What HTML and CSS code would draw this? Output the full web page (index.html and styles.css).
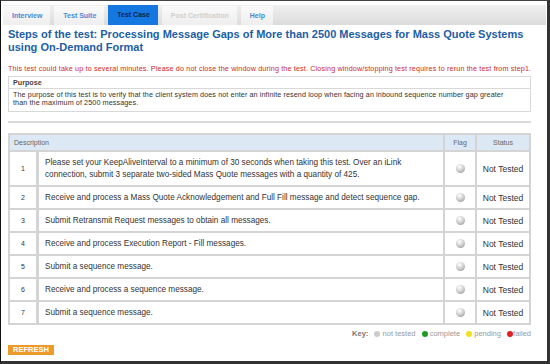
FILE: index.html
```html
<!DOCTYPE html>
<html><head>
    <title>Test Case</title>
    <meta http-equiv="Content-Type" content="text/html; charset=UTF-8">
    <link rel="stylesheet" href="styles.css">
</head>
<body>
<div class="frame">
    <div class="tabbar">
        <a class="tab">Interview</a>
        <a class="tab">Test Suite</a>
        <a class="tab active">Test Case</a>
        <a class="tab disabled">Post Certification</a>
        <a class="tab">Help</a>
    </div>

    <div class="content">
        <h1>Steps of the test: Processing Message Gaps of More than 2500 Messages for Mass Quote Systems using On-Demand Format</h1>
        <p class="warning">This test could take up to several minutes. Please do not close the window during the test. Closing window/stopping test requires to rerun the test from step1.</p>

        <div class="purpose">
            <div class="purpose-head">Purpose</div>
            <div class="purpose-body">The purpose of this test is to verify that the client system does not enter an infinite resend loop when facing an inbound sequence number gap greater than the maximum of 2500 messages.</div>
        </div>

        <div class="separator"></div>

        <table class="steps">
            <tr>
                <th colspan="2" class="th-desc">Description</th>
                <th class="th-flag">Flag</th>
                <th class="th-status">Status</th>
            </tr>
            <tr class="tall">
                <td class="num">1</td>
                <td class="desc">Please set your KeepAliveInterval to a minimum of 30 seconds when taking this test. Over an iLink connection, submit 3 separate two-sided Mass Quote messages with a quantity of 425.</td>
                <td class="flag"><span class="ball"></span></td>
                <td class="status">Not Tested</td>
            </tr>
            <tr>
                <td class="num">2</td>
                <td class="desc">Receive and process a Mass Quote Acknowledgement and Full Fill message and detect sequence gap.</td>
                <td class="flag"><span class="ball"></span></td>
                <td class="status">Not Tested</td>
            </tr>
            <tr>
                <td class="num">3</td>
                <td class="desc">Submit Retransmit Request messages to obtain all messages.</td>
                <td class="flag"><span class="ball"></span></td>
                <td class="status">Not Tested</td>
            </tr>
            <tr>
                <td class="num">4</td>
                <td class="desc">Receive and process Execution Report - Fill messages.</td>
                <td class="flag"><span class="ball"></span></td>
                <td class="status">Not Tested</td>
            </tr>
            <tr>
                <td class="num">5</td>
                <td class="desc">Submit a sequence message.</td>
                <td class="flag"><span class="ball"></span></td>
                <td class="status">Not Tested</td>
            </tr>
            <tr>
                <td class="num">6</td>
                <td class="desc">Receive and process a sequence message.</td>
                <td class="flag"><span class="ball"></span></td>
                <td class="status">Not Tested</td>
            </tr>
            <tr>
                <td class="num">7</td>
                <td class="desc">Submit a sequence message.</td>
                <td class="flag"><span class="ball"></span></td>
                <td class="status">Not Tested</td>
            </tr>
        </table>

        <div class="key">
            <b>Key:</b>
            <span class="dot grey"></span> not tested
            <span class="dot green"></span> complete
            <span class="dot yellow"></span> pending
            <span class="dot red"></span>failed
        </div>

        <a class="refresh">REFRESH</a>
    </div>
</div>
</body></html>
```

FILE: styles.css
```css
body { margin: 0; font-family: "Liberation Sans", Arial, sans-serif; background: #fff; }
.frame { width: 550px; height: 364px; box-sizing: border-box; border-left: 1px solid #111; border-top: 1px solid #444; border-right: 3px solid #333; border-bottom: 3px solid #333; overflow: hidden; }

.tabbar { display: flex; align-items: flex-end; gap: 4px; height: 20px; margin: 4px 1px 0 2px; padding-left: 0; background: linear-gradient(#f0f0f0, #dcdcdc); }
.tab { display: block; height: 19px; line-height: 19px; box-sizing: border-box; padding: 0 8px 0 9px; font-size: 7px; font-weight: bold; color: #4d88d2; background: linear-gradient(#fafafa, #eeeeee); }
.tab.active { height: 20px; line-height: 20px; background: #1577e0; color: #0b2450; }
.tab.disabled { color: #cfcfcf; }

.content { padding: 0 16px 0 7px; }

h1 { margin: 3px 0 0 0; font-size: 11px; line-height: 13px; color: #215ea4; }
.warning { margin: 10px 0 0 0; font-size: 7.2px; letter-spacing: 0.15px; white-space: nowrap; line-height: 9px; color: #cc2a2a; }

.purpose { margin-top: 3px; border: 1px solid #d8d8d8; font-size: 7.2px; color: #333; }
.purpose-head { font-weight: bold; padding: 2px 4px 2px 4px; border-bottom: 1px solid #d8d8d8; line-height: 7px; color: #444; }
.purpose-body { padding: 2px 12px 4px 4px; line-height: 8px; letter-spacing: 0.1px; }

.separator { margin-top: 9px; border-top: 2px solid #dadada; }

.steps { margin-top: 10px; width: 100%; border-collapse: collapse; border: 2px solid #d4d4d4; }
.steps th { background: #dce8f4; font-weight: normal; font-size: 7px; color: #666; height: 15px; padding: 0 4px; border: 2px solid #d4d4d4; }
.steps .th-desc { text-align: left; }
.steps .th-flag { width: 22px; }
.steps .th-status { width: 44px; }
.steps td { border: 2px solid #d4d4d4; height: 21px; font-size: 8.2px; color: #333; padding: 0 4px; }
.steps tr.tall td { height: 33px; }
.steps .num { width: 18px; text-align: center; font-size: 7px; border-right-width: 3px; }
.steps .desc { padding-left: 6px; padding-right: 14px; line-height: 12px; }
.steps .flag { text-align: center; }
.steps .status { text-align: center; font-size: 8.5px; }

.ball { display: inline-block; width: 9px; height: 9px; border-radius: 50%; vertical-align: middle; background: radial-gradient(circle at 40% 30%, #ffffff 0, #d2d2d2 45%, #8d8d8d 100%); }

.key { margin-top: 4px; text-align: right; font-size: 7.5px; color: #999; }
.key b { color: #777; }
.dot { display: inline-block; width: 6px; height: 6px; border-radius: 50%; vertical-align: -1px; margin-left: 4px; }
.dot.grey { background: #ccc; }
.dot.green { background: #1f9a1f; }
.dot.yellow { background: #f0e020; }
.dot.red { background: #e02020; }

.refresh { display: inline-block; margin: 4px 0 0 0; padding: 0 5px; height: 10px; line-height: 10px; background: #ec9a2b; color: #fff; font-size: 7.5px; font-weight: bold; }
```
